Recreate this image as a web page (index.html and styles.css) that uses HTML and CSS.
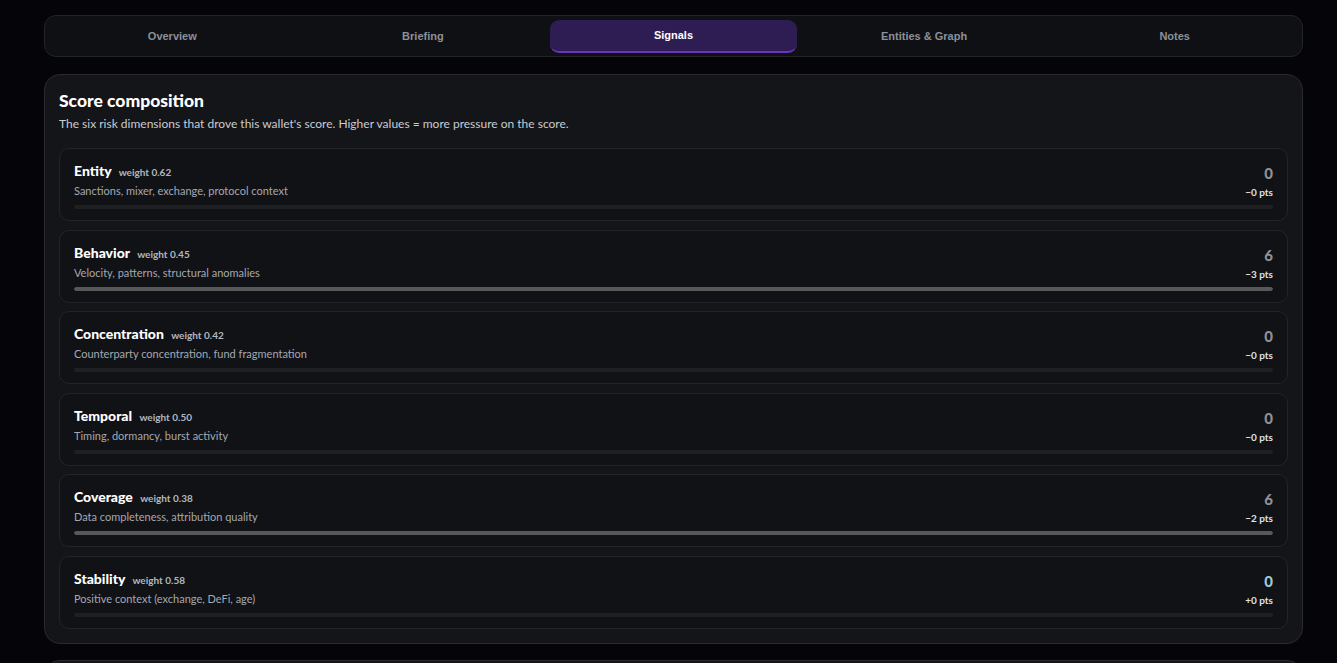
FILE: index.html
```html
<!DOCTYPE html>
<html>
<head>
<meta charset="utf-8">
<link rel="stylesheet" href="styles.css">
</head>
<body>
<div class="page">
  <nav class="tabs">
    <div class="tab">Overview</div>
    <div class="tab">Briefing</div>
    <div class="tab active">Signals</div>
    <div class="tab">Entities &amp; Graph</div>
    <div class="tab">Notes</div>
  </nav>

  <section class="card">
    <h2 class="title">Score composition</h2>
    <p class="subtitle">The six risk dimensions that drove this wallet's score. Higher values = more pressure on the score.</p>

    <div class="rows">
      <div class="row">
        <div class="row-top">
          <div class="info">
            <div class="name">Entity <span class="weight">weight 0.62</span></div>
            <div class="desc">Sanctions, mixer, exchange, protocol context</div>
          </div>
          <div class="value">
            <div class="num">0</div>
            <div class="pts">−0 pts</div>
          </div>
        </div>
        <div class="track"><div class="fill" style="width:0%"></div></div>
      </div>

      <div class="row">
        <div class="row-top">
          <div class="info">
            <div class="name">Behavior <span class="weight">weight 0.45</span></div>
            <div class="desc">Velocity, patterns, structural anomalies</div>
          </div>
          <div class="value">
            <div class="num">6</div>
            <div class="pts">−3 pts</div>
          </div>
        </div>
        <div class="track"><div class="fill" style="width:100%"></div></div>
      </div>

      <div class="row">
        <div class="row-top">
          <div class="info">
            <div class="name">Concentration <span class="weight">weight 0.42</span></div>
            <div class="desc">Counterparty concentration, fund fragmentation</div>
          </div>
          <div class="value">
            <div class="num">0</div>
            <div class="pts">−0 pts</div>
          </div>
        </div>
        <div class="track"><div class="fill" style="width:0%"></div></div>
      </div>

      <div class="row">
        <div class="row-top">
          <div class="info">
            <div class="name">Temporal <span class="weight">weight 0.50</span></div>
            <div class="desc">Timing, dormancy, burst activity</div>
          </div>
          <div class="value">
            <div class="num">0</div>
            <div class="pts">−0 pts</div>
          </div>
        </div>
        <div class="track"><div class="fill" style="width:0%"></div></div>
      </div>

      <div class="row">
        <div class="row-top">
          <div class="info">
            <div class="name">Coverage <span class="weight">weight 0.38</span></div>
            <div class="desc">Data completeness, attribution quality</div>
          </div>
          <div class="value">
            <div class="num">6</div>
            <div class="pts">−2 pts</div>
          </div>
        </div>
        <div class="track"><div class="fill" style="width:100%"></div></div>
      </div>

      <div class="row">
        <div class="row-top">
          <div class="info">
            <div class="name">Stability <span class="weight">weight 0.58</span></div>
            <div class="desc">Positive context (exchange, DeFi, age)</div>
          </div>
          <div class="value">
            <div class="num positive">0</div>
            <div class="pts">+0 pts</div>
          </div>
        </div>
        <div class="track"><div class="fill" style="width:0%"></div></div>
      </div>
    </div>
  </section>

  <section class="card next"></section>
</div>
</body>
</html>
```

FILE: styles.css
```css
* { box-sizing: border-box; }

html, body {
  margin: 0;
  padding: 0;
  background: #050509;
  height: 100%;
  overflow: hidden;
}

body {
  font-family: Lato, "Noto Sans", sans-serif;
  color: #e6e7ea;
}

.page {
  padding: 15px 34px 0 44px;
}

.tabs {
  display: grid;
  grid-template-columns: repeat(5, 1fr);
  gap: 4px;
  padding: 4px;
  height: 42px;
  background: #0f1014;
  border: 1px solid #23252b;
  border-radius: 12px;
}

.tab {
  display: flex;
  align-items: center;
  justify-content: center;
  height: 33px;
  padding-bottom: 1px;
  font-family: "Liberation Sans", Arial, sans-serif;
  font-size: 11px;
  font-weight: 700;
  color: #8b9099;
  border-radius: 9px;
}

.tab.active {
  background: #2e1d52;
  color: #ffffff;
  border-bottom: 2px solid #6b33c4;
}

.card {
  margin-top: 17px;
  background: #141519;
  border: 1px solid #2a2b31;
  border-radius: 16px;
  padding: 15px 14px 14px;
}

.title {
  margin: 0;
  font-size: 17.5px;
  line-height: 22px;
  font-weight: 900;
  color: #ffffff;
}

.subtitle {
  margin: 4px 0 0;
  font-size: 12px;
  line-height: 16px;
  color: #c9ccd2;
}

.rows {
  display: flex;
  flex-direction: column;
  gap: 8.6px;
  margin-top: 16px;
}

.row {
  background: #111216;
  border: 1px solid #222429;
  border-radius: 10px;
  padding: 14px 14px 11px;
}

.row-top {
  display: flex;
  justify-content: space-between;
  align-items: flex-start;
}

.name {
  font-size: 14px;
  line-height: 16px;
  font-weight: 900;
  color: #ffffff;
}

.weight {
  margin-left: 4px;
  font-size: 10px;
  font-weight: 700;
  color: #b3b7bf;
}

.desc {
  margin-top: 4px;
  font-size: 11px;
  line-height: 14px;
  color: #a4a8b0;
}

.value {
  text-align: right;
  padding-top: 2px;
}

.num {
  font-size: 15px;
  line-height: 16px;
  font-weight: 900;
  color: #8e9096;
}

.num.positive {
  color: #9cc7d6;
}

.pts {
  margin-top: 5px;
  font-size: 10px;
  line-height: 12px;
  font-weight: 700;
  color: #dfe2e8;
}

.track {
  margin-top: 7px;
  height: 4px;
  border-radius: 2px;
  background: #1f2024;
  overflow: hidden;
}

.fill {
  height: 100%;
  background: #58585a;
  border-radius: 2px;
}

.card.next {
  margin-top: 16px;
  height: 60px;
}
```
